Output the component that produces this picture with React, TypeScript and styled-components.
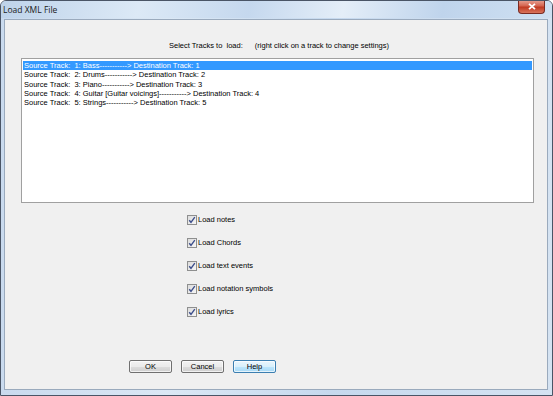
import React from "react";
import styled, { createGlobalStyle } from "styled-components";

const Global = createGlobalStyle`
  html, body { margin: 0; padding: 0; background: #ffffff; overflow: hidden; }
  body { font-family: "Liberation Sans", Arial, sans-serif; }
`;

const Window = styled.div`
  width: 553px;
  height: 396px;
  box-sizing: border-box;
  border: 1px solid #4a5566;
  border-radius: 6px 6px 0 0;
  background: linear-gradient(90deg, #c9daee 0%, #dbe8f5 30%, #c6d9ee 60%, #d5e3f2 100%);
  display: flex;
  flex-direction: column;
  overflow: hidden;
`;

const TitleBar = styled.div`
  height: 17px;
  display: flex;
  align-items: flex-start;
  padding-left: 2px;
  background: linear-gradient(100deg, #bed3ea 0%, #dce9f6 25%, #c5d8ee 45%, #e4eef8 62%, #bfd4ec 80%, #cfe0f2 100%);
`;

const Title = styled.span`
  font-family: "Open Sans", "Liberation Sans", sans-serif;
  font-size: 8.5px;
  line-height: 15px;
  color: #1b1b1b;
  padding-top: 1px;
`;

const CloseButton = styled.div`
  margin-left: auto;
  margin-right: 7px;
  margin-top: -1px;
  width: 27px;
  height: 14px;
  box-sizing: border-box;
  border: 1px solid #7a2b22;
  border-top: none;
  border-radius: 0 0 4px 4px;
  background: linear-gradient(180deg, #e8a597 0%, #d46450 45%, #c03a22 55%, #d9745c 100%);
  display: flex;
  align-items: center;
  justify-content: center;
`;

const Client = styled.div`
  flex: 1;
  margin: 1px 4px 5px 3px;
  border: 1px solid #9aaabd;
  background: #f0f0f0;
  display: flex;
  flex-direction: column;
  font-size: 7.5px;
  color: #000;
`;

const Instruction = styled.div`
  margin-top: 21px;
  margin-left: 164px;
  height: 10px;
  line-height: 10px;
  display: flex;
  gap: 12px;
  white-space: pre;
`;

const ListBox = styled.div`
  margin: 7px 13px 0 16px;
  height: 145px;
  box-sizing: border-box;
  border: 1px solid #a0a0a0;
  background: #ffffff;
  padding: 2px 1px;
`;

const Row = styled.div<{ $selected?: boolean }>`
  height: 9.25px;
  line-height: 9.25px;
  padding-left: 1px;
  white-space: pre;
  background: ${(p) => (p.$selected ? "#3399ff" : "transparent")};
  color: ${(p) => (p.$selected ? "#ffffff" : "#000000")};
`;

const Options = styled.div`
  margin-top: 5px;
  margin-left: 182px;
  display: flex;
  flex-direction: column;
`;

const OptionRow = styled.label`
  height: 23px;
  display: flex;
  align-items: center;
  gap: 1px;
`;

const Box = styled.span`
  width: 10px;
  height: 10px;
  box-sizing: border-box;
  border: 1px solid #8e8f8f;
  background: linear-gradient(135deg, #dcdcdc 0%, #f6f6f6 100%);
  display: flex;
  align-items: center;
  justify-content: center;
`;

const Buttons = styled.div`
  margin-top: 37px;
  margin-left: 124px;
  display: flex;
  gap: 9px;
`;

const Button = styled.div<{ $focused?: boolean }>`
  width: 43px;
  height: 13px;
  box-sizing: border-box;
  border: 1px solid ${(p) => (p.$focused ? "#3c7fb1" : "#707070")};
  border-radius: 2px;
  background: ${(p) =>
    p.$focused
      ? "linear-gradient(180deg, #eaf6fd 0%, #d9f0fc 50%, #bee6fd 51%, #a7d9f5 100%)"
      : "linear-gradient(180deg, #f2f2f2 0%, #ebebeb 50%, #dddddd 51%, #cfcfcf 100%)"};
  box-shadow: inset 0 0 0 1px rgba(255, 255, 255, 0.7);
  display: flex;
  align-items: center;
  justify-content: center;
  line-height: 11px;
`;

const Check = () => (
  <svg width="8" height="8" viewBox="0 0 8 8">
    <path d="M1.2 4.2 L3 6.3 L6.8 1.2" fill="none" stroke="#3d4f8c" strokeWidth="1.4" />
  </svg>
);

const tracks = [
  "Source Track:  1: Bass-----------> Destination Track: 1",
  "Source Track:  2: Drums-----------> Destination Track: 2",
  "Source Track:  3: Piano-----------> Destination Track: 3",
  "Source Track:  4: Guitar [Guitar voicings]-----------> Destination Track: 4",
  "Source Track:  5: Strings-----------> Destination Track: 5",
];

const options = [
  "Load notes",
  "Load Chords",
  "Load text events",
  "Load notation symbols",
  "Load lyrics",
];

export default function App() {
  return (
    <>
      <Global />
      <Window>
        <TitleBar>
          <Title>Load XML File</Title>
          <CloseButton>
            <svg width="8" height="7" viewBox="0 0 8 7">
              <path d="M1 0.8 L7 6.2 M7 0.8 L1 6.2" stroke="#ffffff" strokeWidth="1.8" />
            </svg>
          </CloseButton>
        </TitleBar>
        <Client>
          <Instruction>
            <span>Select Tracks to  load:</span>
            <span>(right click on a track to change settings)</span>
          </Instruction>
          <ListBox>
            {tracks.map((t, i) => (
              <Row key={t} $selected={i === 0}>
                {t}
              </Row>
            ))}
          </ListBox>
          <Options>
            {options.map((o) => (
              <OptionRow key={o}>
                <Box>
                  <Check />
                </Box>
                <span>{o}</span>
              </OptionRow>
            ))}
          </Options>
          <Buttons>
            <Button>OK</Button>
            <Button>Cancel</Button>
            <Button $focused>Help</Button>
          </Buttons>
        </Client>
      </Window>
    </>
  );
}
